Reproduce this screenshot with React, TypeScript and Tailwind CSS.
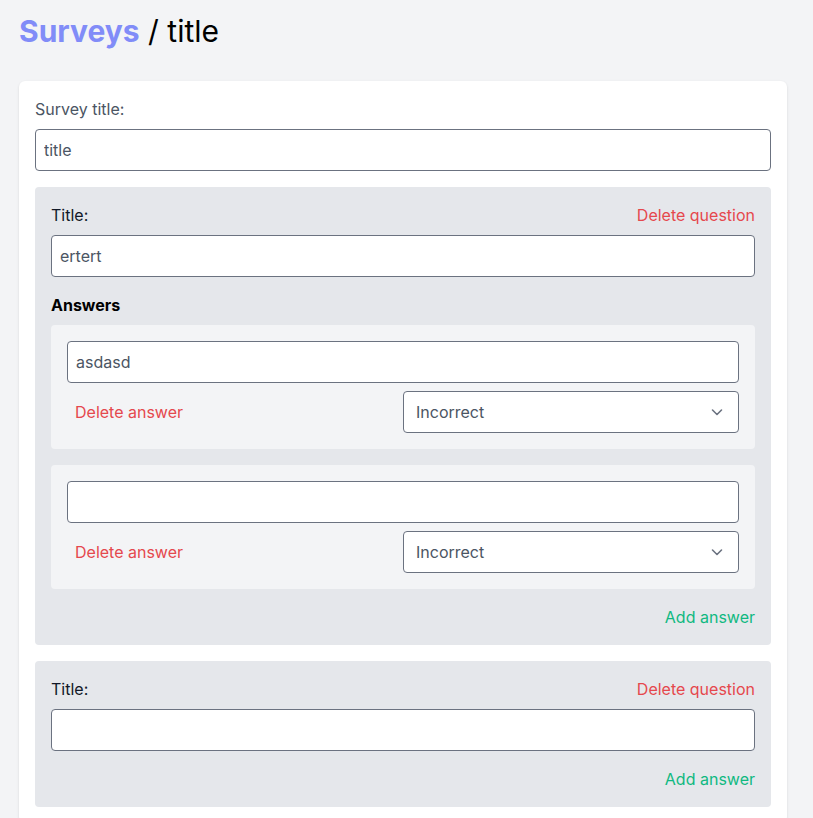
import { useState } from "react";

type Answer = { text: string; correct: boolean };
type Question = { title: string; answers: Answer[] };

const Chevron = () => (
  <svg
    className="pointer-events-none absolute right-[12px] top-1/2 h-5 w-5 -translate-y-1/2 text-[#6b7280]"
    viewBox="0 0 20 20"
    fill="none"
  >
    <path d="M5.5 8l4.5 4.5L14.5 8" stroke="currentColor" strokeWidth="1.6" strokeLinecap="round" strokeLinejoin="round" />
  </svg>
);

const AnswerRow = ({ answer }: { answer: Answer }) => (
  <div className="flex flex-col gap-2 rounded bg-[#f3f4f6] p-4">
    <input
      type="text"
      defaultValue={answer.text}
      className="h-[42px] w-full rounded border border-[#6b7280] bg-white px-2 text-[#4b5563] outline-none"
    />
    <div className="grid grid-cols-2">
      <button type="button" className="justify-self-start px-2 text-[#e5484d]">
        Delete answer
      </button>
      <div className="relative">
        <select
          defaultValue={answer.correct ? "correct" : "incorrect"}
          className="h-[42px] w-full appearance-none rounded border border-[#6b7280] bg-white px-3 text-[#4b5563] outline-none"
        >
          <option value="incorrect">Incorrect</option>
          <option value="correct">Correct</option>
        </select>
        <Chevron />
      </div>
    </div>
  </div>
);

const QuestionBox = ({ question }: { question: Question }) => (
  <div className="flex flex-col rounded bg-[#e5e7eb] p-4">
    <div className="mb-2 flex items-center justify-between">
      <label className="text-[#111827]">Title:</label>
      <button type="button" className="text-[#e5484d]">
        Delete question
      </button>
    </div>
    <input
      type="text"
      defaultValue={question.title}
      className="h-[42px] w-full rounded border border-[#6b7280] bg-white px-2 text-[#4b5563] outline-none"
    />
    {question.answers.length > 0 && (
      <>
        <h3 className="mt-4 mb-2 font-bold text-black">Answers</h3>
        <div className="flex flex-col gap-4">
          {question.answers.map((a, i) => (
            <AnswerRow key={i} answer={a} />
          ))}
        </div>
      </>
    )}
    <div className="mt-4 flex justify-end">
      <button type="button" className="text-[#10b981]">
        Add answer
      </button>
    </div>
  </div>
);

export default function App() {
  const [questions] = useState<Question[]>([
    {
      title: "ertert",
      answers: [
        { text: "asdasd", correct: false },
        { text: "", correct: false },
      ],
    },
    { title: "", answers: [] },
  ]);

  return (
    <div className="min-h-screen bg-[#f3f4f6] pt-[13px] pr-5 pb-8 pl-[19px] font-['Inter',sans-serif] text-base">
      <h1 className="mb-8 text-[30px] leading-9 text-black">
        <span className="font-bold text-[#818cf8]">Surveys</span> / title
      </h1>
      <div className="w-full max-w-3xl rounded-md bg-white p-4 shadow-sm">
        <label className="mb-2 block text-[#4b5563]">Survey title:</label>
        <input
          type="text"
          defaultValue="title"
          className="mb-4 h-[42px] w-full rounded border border-[#6b7280] bg-white px-2 text-[#4b5563] outline-none"
        />
        <div className="flex flex-col gap-4">
          {questions.map((q, i) => (
            <QuestionBox key={i} question={q} />
          ))}
        </div>
      </div>
    </div>
  );
}
